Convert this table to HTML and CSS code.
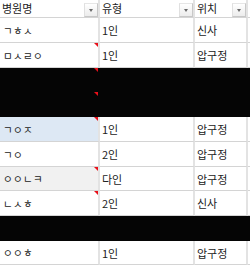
FILE: index.html
```html
<!DOCTYPE html>
<html lang="ko">
<head>
<meta charset="utf-8">
<link rel="stylesheet" href="styles.css">
</head>
<body>
<div class="sheet">
  <div class="row head">
    <div class="cell">병원명<span class="dd"></span></div>
    <div class="cell">유형<span class="dd"></span></div>
    <div class="cell">위치<span class="dd"></span></div>
    <div class="cell end"></div>
  </div>
  <div class="row r25">
    <div class="cell jamo">ㄱㅎㅅ</div>
    <div class="cell">1인</div>
    <div class="cell">신사</div>
    <div class="cell end"></div>
  </div>
  <div class="row r25">
    <div class="cell jamo note">ㅁㅅㄹㅇ</div>
    <div class="cell">1인</div>
    <div class="cell">압구정</div>
    <div class="cell end"></div>
  </div>
  <div class="row r24 black">
    <div class="cell note"></div>
    <div class="cell"></div>
    <div class="cell"></div>
    <div class="cell end"></div>
  </div>
  <div class="row r25 black">
    <div class="cell note"></div>
    <div class="cell"></div>
    <div class="cell"></div>
    <div class="cell end"></div>
  </div>
  <div class="row r25">
    <div class="cell jamo note sel">ㄱㅇㅈ</div>
    <div class="cell">1인</div>
    <div class="cell">압구정</div>
    <div class="cell end"></div>
  </div>
  <div class="row r25">
    <div class="cell jamo">ㄱㅇ</div>
    <div class="cell">2인</div>
    <div class="cell">압구정</div>
    <div class="cell end"></div>
  </div>
  <div class="row r24">
    <div class="cell jamo note grey">ㅇㅇㄴㅋ</div>
    <div class="cell">다인</div>
    <div class="cell">압구정</div>
    <div class="cell end"></div>
  </div>
  <div class="row r25">
    <div class="cell jamo note">ㄴㅅㅎ</div>
    <div class="cell">2인</div>
    <div class="cell">신사</div>
    <div class="cell end"></div>
  </div>
  <div class="row r25 black">
    <div class="cell"></div>
    <div class="cell"></div>
    <div class="cell"></div>
    <div class="cell end"></div>
  </div>
  <div class="row r24">
    <div class="cell jamo">ㅇㅇㅎ</div>
    <div class="cell">1인</div>
    <div class="cell">압구정</div>
    <div class="cell end"></div>
  </div>
</div>
</body>
</html>
```
FILE: styles.css
```css
* { box-sizing: border-box; }
html, body { margin: 0; padding: 0; background: #fff; }
body {
  font-family: "Noto Sans CJK KR", "Noto Sans", sans-serif;
  font-size: 11px;
  color: #222;
}
.sheet { width: 250px; }
.row {
  display: grid;
  grid-template-columns: 100px 95px 53px 2px;
}
.head { height: 18px; }
.r25 { height: 25px; }
.r24 { height: 24px; }
.cell {
  position: relative;
  display: flex;
  align-items: center;
  padding-left: 2px;
  border-right: 2px solid #e3e3e3;
  border-bottom: 1px solid #d4d4d4;
  white-space: nowrap;
  overflow: hidden;
}
.cell.end { border-right: none; padding: 0; }
.head .cell { padding-bottom: 1px; }
.jamo { font-size: 10.5px; letter-spacing: 0.3px; padding-left: 3px; }
.sel { background: #dde8f4; }
.grey { background: #f1f1f1; }
.black { background: #050505; }
.black .cell { border-color: #050505; }
.note::after {
  content: "";
  position: absolute;
  top: 0;
  right: 0;
  border-top: 4px solid #e8101a;
  border-left: 4px solid transparent;
}
.dd {
  position: absolute;
  right: 0;
  top: 3px;
  width: 14px;
  height: 14px;
  border: 1px solid #c8c8c8;
  border-left-color: #e0e0e0;
  border-top-color: #e6e6e6;
  background: linear-gradient(#ffffff, #ececec);
}
.dd::after {
  content: "";
  position: absolute;
  left: 4px;
  top: 5px;
  border-top: 3px solid #6a6a6a;
  border-left: 2.5px solid transparent;
  border-right: 2.5px solid transparent;
}
```
